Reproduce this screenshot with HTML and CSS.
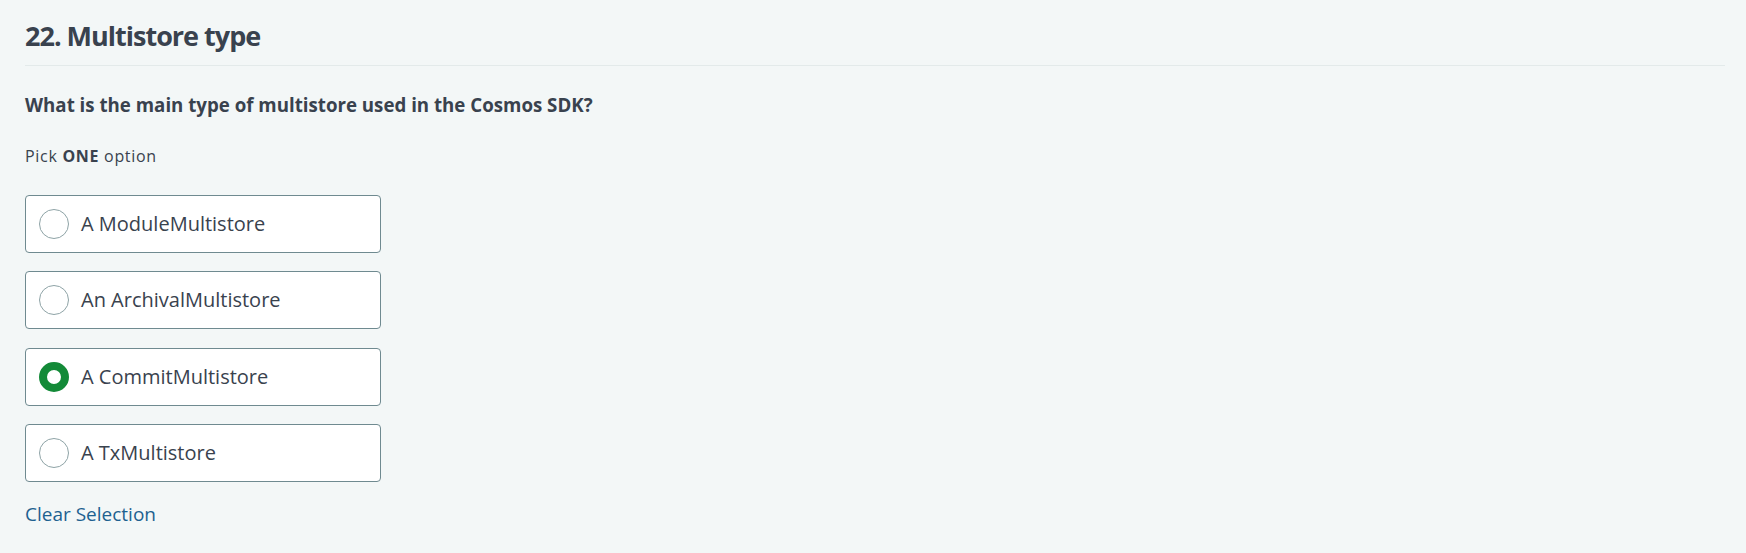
FILE: index.html
```html
<!DOCTYPE html>
<html lang="en">
<head>
<meta charset="utf-8">
<title>22. Multistore type</title>
<link rel="stylesheet" href="styles.css">
</head>
<body>
<div class="page">
  <h1 class="title">22. Multistore type</h1>
  <p class="question">What is the main type of multistore used in the Cosmos SDK?</p>
  <p class="hint">Pick <strong>ONE</strong> option</p>
  <div class="options">
    <label class="option"><span class="radio"></span><span class="label">A ModuleMultistore</span></label>
    <label class="option"><span class="radio"></span><span class="label">An ArchivalMultistore</span></label>
    <label class="option"><span class="radio radio-on"></span><span class="label">A CommitMultistore</span></label>
    <label class="option"><span class="radio"></span><span class="label">A TxMultistore</span></label>
  </div>
  <a class="clear" href="#">Clear Selection</a>
</div>
</body>
</html>
```
FILE: styles.css
```css
html, body {
  margin: 0;
  padding: 0;
  background: #f3f7f7;
}
body {
  font-family: "Open Sans", "DejaVu Sans", sans-serif;
  color: #39424e;
}
.page {
  padding: 18px 21px 0 25px;
}
.title {
  margin: 0;
  font-size: 27px;
  font-weight: 700;
  letter-spacing: -1px;
  line-height: 36px;
  padding-bottom: 11px;
  border-bottom: 1px solid #e3eaea;
}
.question {
  margin: 26.5px 0 0;
  font-size: 18.7px;
  font-weight: 700;
  line-height: 24px;
}
.hint {
  margin: 28.5px 0 0;
  font-size: 16px;
  letter-spacing: 0.7px;
  line-height: 22px;
}
.hint strong {
  font-weight: 700;
}
.options {
  margin-top: 28px;
  display: flex;
  flex-direction: column;
  gap: 18.33px;
  width: 356px;
}
.option {
  box-sizing: border-box;
  height: 58px;
  display: flex;
  align-items: center;
  gap: 12px;
  padding: 0 13px;
  background: #ffffff;
  border: 1px solid #6f8a90;
  border-radius: 4px;
  cursor: pointer;
}
.radio {
  box-sizing: border-box;
  width: 30px;
  height: 30px;
  flex: none;
  border-radius: 50%;
  border: 1px solid #8ea3a6;
  background: #ffffff;
}
.radio-on {
  border: 8px solid #138a38;
}
.label {
  font-size: 20px;
  line-height: 26px;
}
.clear {
  display: inline-block;
  margin-top: 20px;
  font-size: 19px;
  line-height: 24px;
  color: #1d6190;
  text-decoration: none;
}
```
